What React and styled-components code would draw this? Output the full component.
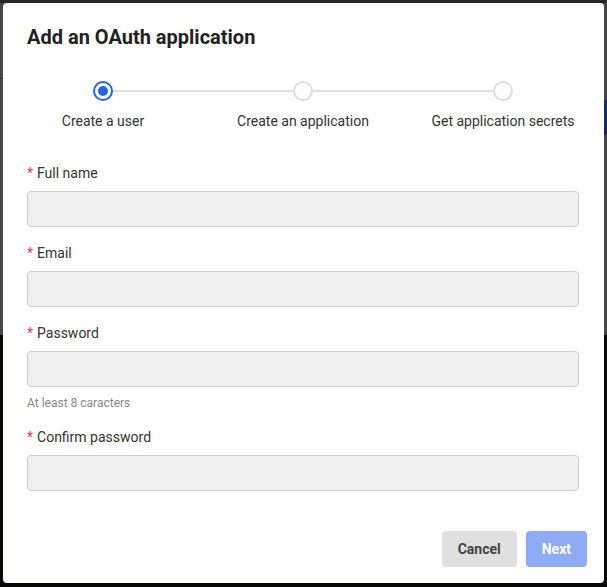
import styled, { createGlobalStyle } from "styled-components";

const GlobalStyle = createGlobalStyle`
  html, body {
    margin: 0;
    padding: 0;
    background: #0a0806;
  }
  * {
    box-sizing: border-box;
  }
`;

const Backdrop = styled.div`
  height: 587px;
  padding: 3px 3px 4px;
  font-family: Roboto, "Liberation Sans", sans-serif;
  background:
    linear-gradient(#1b2a5c, #1b2a5c) right 0 top 100px / 3px 35px no-repeat,
    linear-gradient(#2c2c2c, #2c2c2c) left 0 top 78px / 3px 1px no-repeat,
    linear-gradient(#262626 0 3px, #464646 3px 335px, #0a0806 335px);
`;

const Modal = styled.div`
  width: 601px;
  height: 580px;
  background: #fff;
  border-radius: 4px;
  padding: 20px 17px 16px 24px;
  display: flex;
  flex-direction: column;
`;

const Title = styled.h2`
  margin: 0;
  font-size: 20px;
  line-height: 28px;
  font-weight: 700;
  color: #222;
`;

const Stepper = styled.div`
  display: grid;
  grid-template-columns: repeat(3, 200px);
  margin: 30px 0 0 -24px;
`;

const Step = styled.div`
  position: relative;
  display: flex;
  flex-direction: column;
  align-items: center;

  &::before {
    content: "";
    display: ${(p) => (p.$last ? "none" : "block")};
    position: absolute;
    top: 9px;
    left: calc(50% + 10px);
    width: 180px;
    height: 2px;
    background: #e0e0e0;
  }
`;

const Dot = styled.span`
  width: 20px;
  height: 20px;
  border-radius: 50%;
  border: 2px solid ${(p) => (p.$active ? "#2563eb" : "#dcdcdc")};
  background: #fff;
  display: flex;
  align-items: center;
  justify-content: center;

  &::after {
    content: "";
    display: ${(p) => (p.$active ? "block" : "none")};
    width: 10px;
    height: 10px;
    border-radius: 50%;
    background: #2563eb;
  }
`;

const StepLabel = styled.span`
  margin-top: 10px;
  font-size: 14px;
  line-height: 20px;
  color: #333;
  white-space: nowrap;
`;

const Form = styled.div`
  margin-top: 32px;
  padding-right: 8px;
  display: flex;
  flex-direction: column;
  gap: 16px;
`;

const Field = styled.div`
  display: flex;
  flex-direction: column;
`;

const Label = styled.label`
  font-size: 14px;
  line-height: 20px;
  color: #333;
  margin-bottom: 8px;

  span {
    color: #e5365a;
    margin-right: 4px;
  }
`;

const Input = styled.input`
  height: 36px;
  width: 100%;
  border: 1px solid #cfcfcf;
  border-radius: 4px;
  background: #f0f0f0;
  outline: none;
  font: inherit;
`;

const Hint = styled.div`
  margin-top: 8px;
  font-size: 12px;
  line-height: 16px;
  color: #888;
`;

const Footer = styled.div`
  margin-top: auto;
  display: flex;
  justify-content: flex-end;
  gap: 9px;
`;

const Button = styled.button`
  height: 36px;
  padding: 0 16px;
  border: none;
  border-radius: 4px;
  font-family: inherit;
  font-size: 14px;
  font-weight: 700;
  background: ${(p) => (p.$primary ? "#8fabf5" : "#e0e0e0")};
  color: ${(p) => (p.$primary ? "#fff" : "#444")};
`;

const steps = ["Create a user", "Create an application", "Get application secrets"];

const fields = [
  { label: "Full name" },
  { label: "Email" },
  { label: "Password", hint: "At least 8 caracters" },
  { label: "Confirm password" },
];

export default function App() {
  return (
    <>
      <GlobalStyle />
      <Backdrop>
        <Modal>
          <Title>Add an OAuth application</Title>
          <Stepper>
            {steps.map((s, i) => (
              <Step key={s} $last={i === steps.length - 1}>
                <Dot $active={i === 0} />
                <StepLabel>{s}</StepLabel>
              </Step>
            ))}
          </Stepper>
          <Form>
            {fields.map((f) => (
              <Field key={f.label}>
                <Label>
                  <span>*</span>
                  {f.label}
                </Label>
                <Input type={f.label.includes("assword") ? "password" : "text"} />
                {f.hint && <Hint>{f.hint}</Hint>}
              </Field>
            ))}
          </Form>
          <Footer>
            <Button>Cancel</Button>
            <Button $primary>Next</Button>
          </Footer>
        </Modal>
      </Backdrop>
    </>
  );
}
